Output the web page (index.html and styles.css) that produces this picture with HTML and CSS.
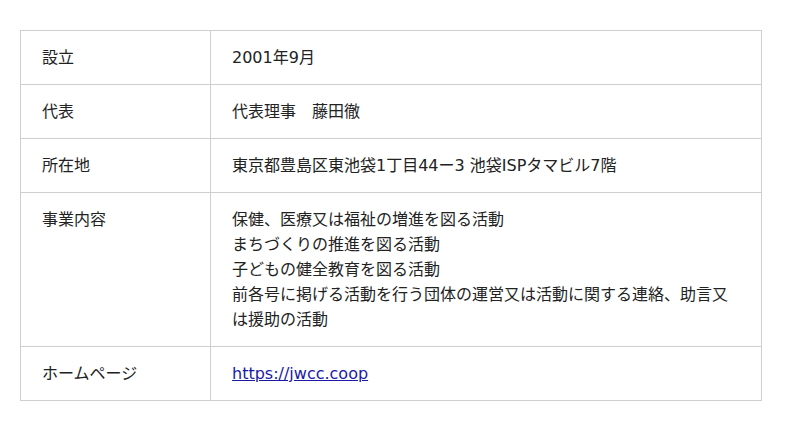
FILE: index.html
```html
<!DOCTYPE html>
<html lang="ja">
<head>
<meta charset="utf-8">
<link rel="stylesheet" href="styles.css">
</head>
<body>
<div class="wrap">
<table class="info">
<tr><th>設立</th><td>2001年9月</td></tr>
<tr><th>代表</th><td>代表理事　藤田徹</td></tr>
<tr><th>所在地</th><td>東京都豊島区東池袋1丁目44ー3 池袋ISPタマビル7階</td></tr>
<tr><th>事業内容</th><td>保健、医療又は福祉の増進を図る活動<br>まちづくりの推進を図る活動<br>子どもの健全教育を図る活動<br>前各号に掲げる活動を行う団体の運営又は活動に関する連絡、助言又は援助の活動</td></tr>
<tr><th>ホームページ</th><td><a href="#" class="link">https://jwcc.coop</a></td></tr>
</table>
</div>
</body>
</html>
```
FILE: styles.css
```css
html, body {
  margin: 0;
  padding: 0;
  background: #fff;
}
body {
  font-family: "DejaVu Sans", "Noto Sans CJK JP", sans-serif;
  font-size: 16px;
  color: #222;
}
.wrap {
  padding: 30px 38px 0 20px;
}
.info {
  width: 742px;
  border-collapse: collapse;
}
.info th, .info td {
  border: 1px solid #cfcfcf;
  padding: 14px 21px;
  line-height: 25px;
  text-align: left;
  vertical-align: top;
  font-weight: normal;
}
.info th {
  width: 147px;
}
.link {
  color: #1a1aa6;
  text-decoration: underline;
}
```
